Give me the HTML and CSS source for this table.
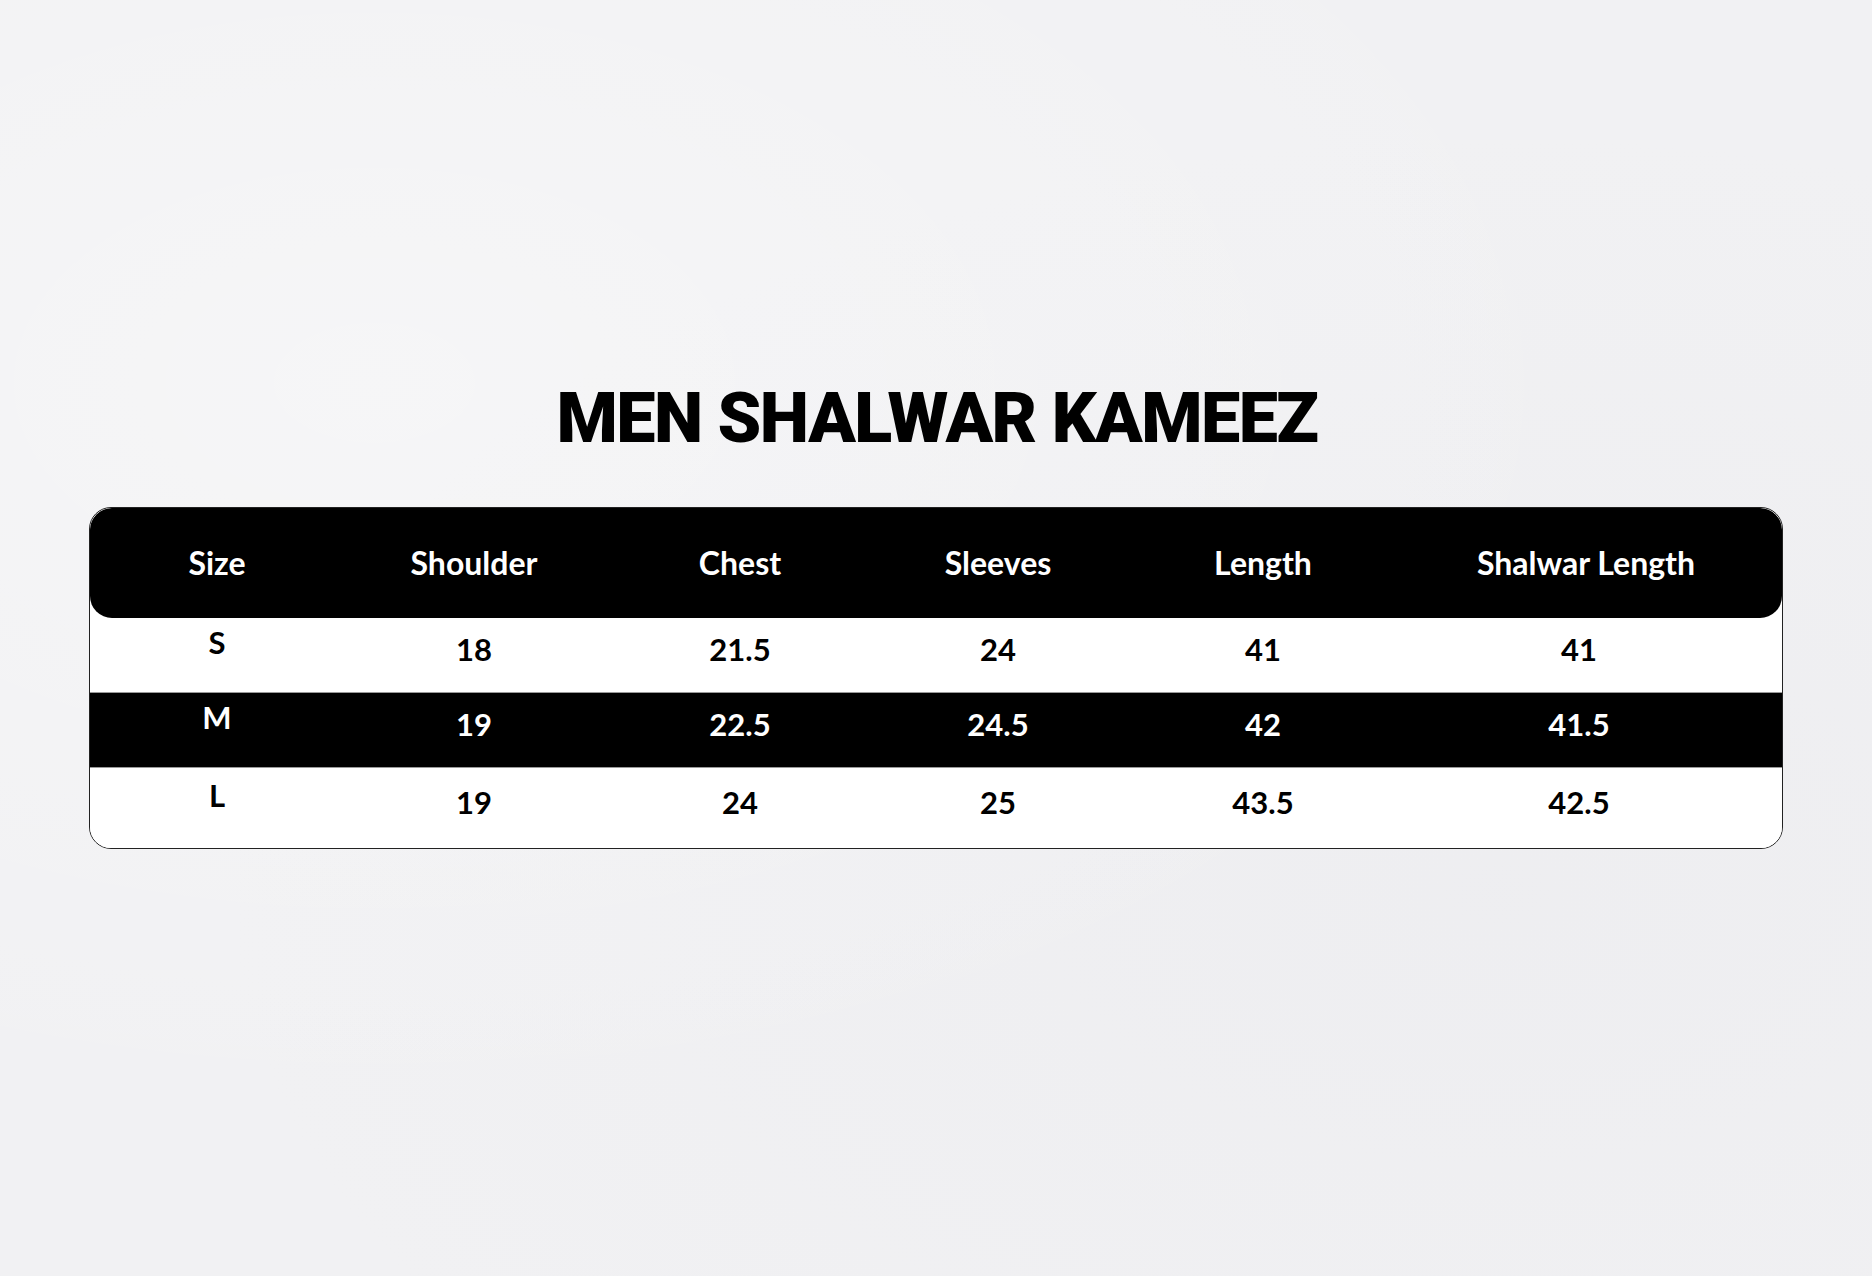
FILE: index.html
```html
<!DOCTYPE html>
<html lang="en">
<head>
<meta charset="utf-8">
<title>Men Shalwar Kameez Size Chart</title>
<link rel="stylesheet" href="styles.css">
</head>
<body>
<main class="page">
  <h1 class="title">MEN SHALWAR KAMEEZ</h1>
  <div class="chart">
    <div class="row head">
      <div class="cell">Size</div>
      <div class="cell">Shoulder</div>
      <div class="cell">Chest</div>
      <div class="cell">Sleeves</div>
      <div class="cell">Length</div>
      <div class="cell last">Shalwar Length</div>
    </div>
    <div class="row data light r1">
      <div class="cell size">S</div>
      <div class="cell">18</div>
      <div class="cell">21.5</div>
      <div class="cell">24</div>
      <div class="cell">41</div>
      <div class="cell">41</div>
    </div>
    <div class="row data dark r2">
      <div class="cell size">M</div>
      <div class="cell">19</div>
      <div class="cell">22.5</div>
      <div class="cell">24.5</div>
      <div class="cell">42</div>
      <div class="cell">41.5</div>
    </div>
    <div class="row data light r3">
      <div class="cell size">L</div>
      <div class="cell">19</div>
      <div class="cell">24</div>
      <div class="cell">25</div>
      <div class="cell">43.5</div>
      <div class="cell">42.5</div>
    </div>
  </div>
</main>
</body>
</html>
```
FILE: styles.css
```css
html, body {
  margin: 0;
  padding: 0;
}
body {
  width: 1872px;
  height: 1276px;
  background: #f1f1f3;
  background-image:
    radial-gradient(ellipse at 20% 30%, rgba(255,255,255,0.35), transparent 60%),
    radial-gradient(ellipse at 80% 70%, rgba(232,232,236,0.35), transparent 60%);
  font-family: "Lato", "Liberation Sans", sans-serif;
  overflow: hidden;
}
.page {
  display: flex;
  flex-direction: column;
  align-items: center;
  padding-top: 379px;
}
.title {
  margin: 0 0 0 2px;
  font-family: "Roboto", "Liberation Sans", sans-serif;
  font-weight: 900;
  font-size: 70px;
  line-height: 79px;
  letter-spacing: -1.5px;
  color: #000;
}
.chart {
  margin-top: 49px;
  width: 1692px;
  border: 1px solid #222;
  border-radius: 22px;
  background: #fff;
  overflow: hidden;
}
.row {
  box-sizing: border-box;
  display: grid;
  grid-template-columns: 254px 260px 272px 244px 286px 1fr;
  align-items: center;
  padding-right: 30px;
}
.cell {
  text-align: center;
  font-weight: 700;
  font-size: 31px;
  line-height: 36px;
}
.head {
  height: 110px;
  background: #000;
  color: #fff;
  border-radius: 22px;
}
.head .cell {
  font-size: 32px;
}
.head .last {
  padding-left: 14px;
}
.data {
  padding-bottom: 12px;
}
.light {
  color: #000;
  background: #fff;
}
.dark {
  color: #fff;
  background: #000;
  border-top: 1px solid #9a9a9a;
  border-bottom: 1px solid #9a9a9a;
}
.r1 { height: 74px; }
.r2 { height: 76px; }
.r3 { height: 80px; }
.size {
  margin-bottom: 14px;
}
```
